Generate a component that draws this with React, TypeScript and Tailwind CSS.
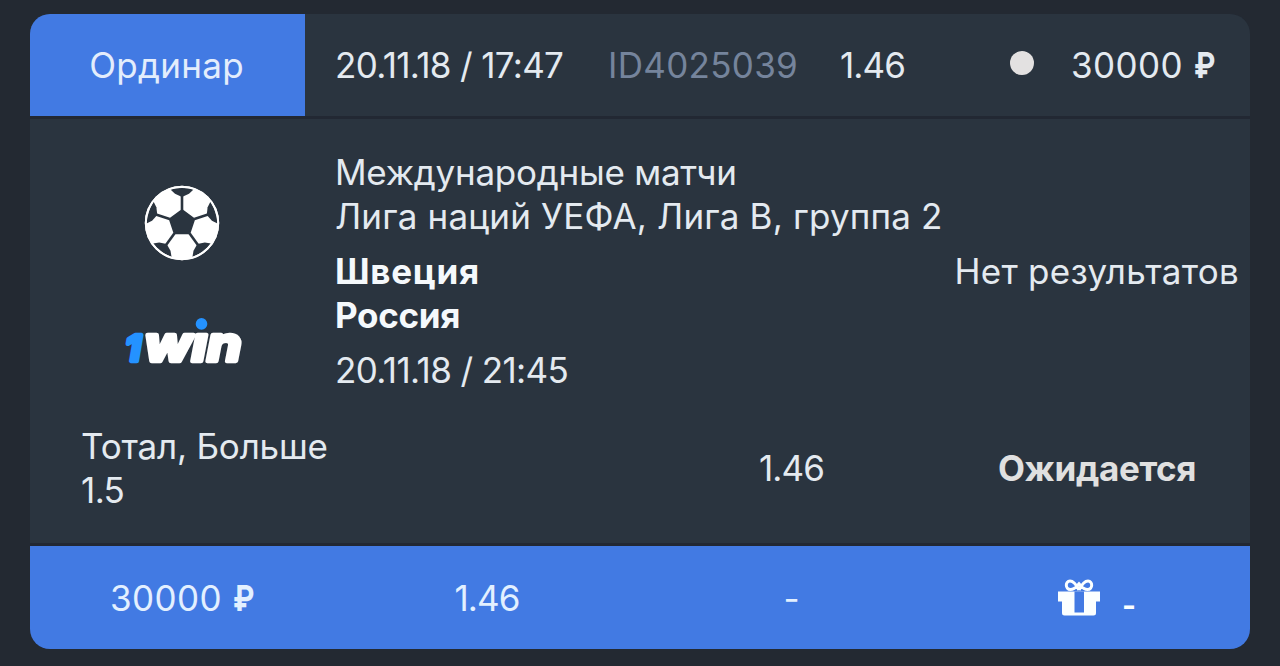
import { clsx } from 'clsx';

function Ruble() {
  return <span className="ml-[11px] inline-block w-[21px] origin-left scale-x-[0.8] text-[36px] font-bold tracking-normal">₽</span>;
}

function FootballIcon() {
  const angles = [0, 72, 144, 216, 288];
  return (
    <svg viewBox="0 0 76 76" className="size-[76px]">
      <defs>
        <clipPath id="ball">
          <circle cx="38" cy="38" r="36" />
        </clipPath>
      </defs>
      <circle cx="38" cy="38" r="37.2" fill="#fff" />
      <g clipPath="url(#ball)" fill="#2a343f" stroke="#2a343f">
        <path d="M38 25 L50.4 34 L45.6 48.5 H30.4 L25.6 34 Z" strokeWidth="1.6" />
        {angles.map((angle) => (
          <g key={angle} transform={`rotate(${angle} 38 38)`}>
            <path d="M38 25 V9" strokeWidth="2.6" fill="none" />
            <path d="M38 12 L31 8.8 L26.5 4.4 Q38 1.5 49.5 4.4 L45 8.8 Z" stroke="none" />
          </g>
        ))}
      </g>
      <circle cx="38" cy="38" r="36.2" fill="none" stroke="#fff" strokeWidth="2" />
    </svg>
  );
}

function WinLogo() {
  return (
    <svg viewBox="0 0 120 48" className="h-[48px] w-[120px] overflow-visible font-['Inter',sans-serif] font-bold italic">
      <g strokeLinejoin="round" strokeLinecap="round" strokeWidth="4.4">
        <text x="3" y="43.8" fontSize="36" textLength="16" lengthAdjust="spacingAndGlyphs" fill="#2492ff" stroke="#2492ff">
          1
        </text>
        <text x="22.5" y="43.8" fontSize="48" textLength="97" lengthAdjust="spacingAndGlyphs" fill="#fff" stroke="#fff">
          wın
        </text>
      </g>
      <circle cx="79.5" cy="6.9" r="5.8" fill="#2492ff" />
    </svg>
  );
}

function GiftIcon() {
  return (
    <svg viewBox="0 0 42 38" className="h-[38px] w-[42px]" fill="#fbffff">
      <path d="M0 12.5 H42 V22.5 H38 V34 Q38 36.5 35.5 36.5 H6.5 Q4 36.5 4 34 V22.5 H0 Z" />
      <path d="M16.5 12.5 H26 V33.5 H16.5 Z" fill="#427ae3" />
      <g fill="none" stroke="#fbffff" strokeWidth="3">
        <path d="M21 11 C18 5 15 2 12 2 C7 2 7 10.5 12.5 10.5 C16.5 10.5 19 7 21 4.8 C23 7 25.5 10.5 29.5 10.5 C35 10.5 35 2 30 2 C27 2 24 5 21 11" />
      </g>
    </svg>
  );
}

function BetHeader() {
  return (
    <div className="flex h-[102px] items-center bg-[#2a343f]">
      <div className="flex h-full w-[275px] items-center justify-center bg-[#427ae3] pr-[2px] text-[#e3edfc] tracking-[0.3px]">
        Ординар
      </div>
      <span className="ml-[30px] w-[273px] tracking-[-0.65px]">20.11.18 / 17:47</span>
      <span className="w-[232px] text-[#75849c] tracking-[0.3px]">ID4025039</span>
      <span className="w-[170px] tracking-[-0.9px]">1.46</span>
      <span className="mb-[5px] size-[24px] rounded-full bg-[#e3e1e1]" />
      <span className="ml-[37px] tracking-[0.4px]">
        30000
        <Ruble />
      </span>
    </div>
  );
}

function BetBody() {
  return (
    <div className="h-[424px] bg-[#2a343f] pt-[31px]">
      <div className="flex">
        <div className="flex w-[305px] flex-col items-center pr-[2px] pt-[35px]">
          <FootballIcon />
          <div className="mt-[56px]">
            <WinLogo />
          </div>
        </div>
        <div className="flex-1 leading-[44px]">
          <p className="tracking-[-0.25px]">Международные матчи</p>
          <p className="tracking-[0.18px]">Лига наций УЕФА, Лига В, группа 2</p>
          <div className="mt-[11px] flex justify-between">
            <div className="font-bold text-[#f5f9fc]">
              <p className="tracking-[0.7px]">Швеция</p>
              <p className="tracking-[-0.3px]">Россия</p>
            </div>
            <p className="mr-[11px] tracking-[0.25px]">Нет результатов</p>
          </div>
          <p className="mt-[11px] tracking-[-0.6px]">20.11.18 / 21:45</p>
        </div>
      </div>
      <div className="mt-[32px] flex items-center pl-[51px] leading-[44px]">
        <div className="w-[678px]">
          <p className="tracking-[-0.2px]">Тотал, Больше</p>
          <p className="tracking-[-0.6px]">1.5</p>
        </div>
        <span className="w-[239px] tracking-[-0.9px]">1.46</span>
        <span className="font-bold tracking-[-0.35px] text-[#e0e0e0]">Ожидается</span>
      </div>
    </div>
  );
}

function BetFooter() {
  const cell = 'flex items-center justify-center';
  return (
    <div className="flex h-[103px] bg-[#427ae3] text-[#e3f0ff]">
      <div className={clsx(cell, 'w-[305px] pr-px tracking-[0.4px]')}>
        <span>
          30000
          <Ruble />
        </span>
      </div>
      <div className={clsx(cell, 'w-[304px] tracking-[-0.9px]')}>1.46</div>
      <div className={clsx(cell, 'w-[305px]')}>-</div>
      <div className={clsx(cell, 'w-[306px] gap-[22px] font-bold text-[#fbffff]')}>
        <GiftIcon />
        <span className="pt-[14px] text-[30px]">-</span>
      </div>
    </div>
  );
}

export default function App() {
  return (
    <div className="h-[666px] w-[1280px] bg-[#232932] px-[30px] pt-[14px] font-['Inter','Noto_Sans',sans-serif] text-[35px] leading-[44px] text-[#e4eaf0]">
      <div className="flex flex-col gap-[3px] overflow-hidden rounded-[20px] bg-[#222833]">
        <BetHeader />
        <BetBody />
        <BetFooter />
      </div>
    </div>
  );
}
